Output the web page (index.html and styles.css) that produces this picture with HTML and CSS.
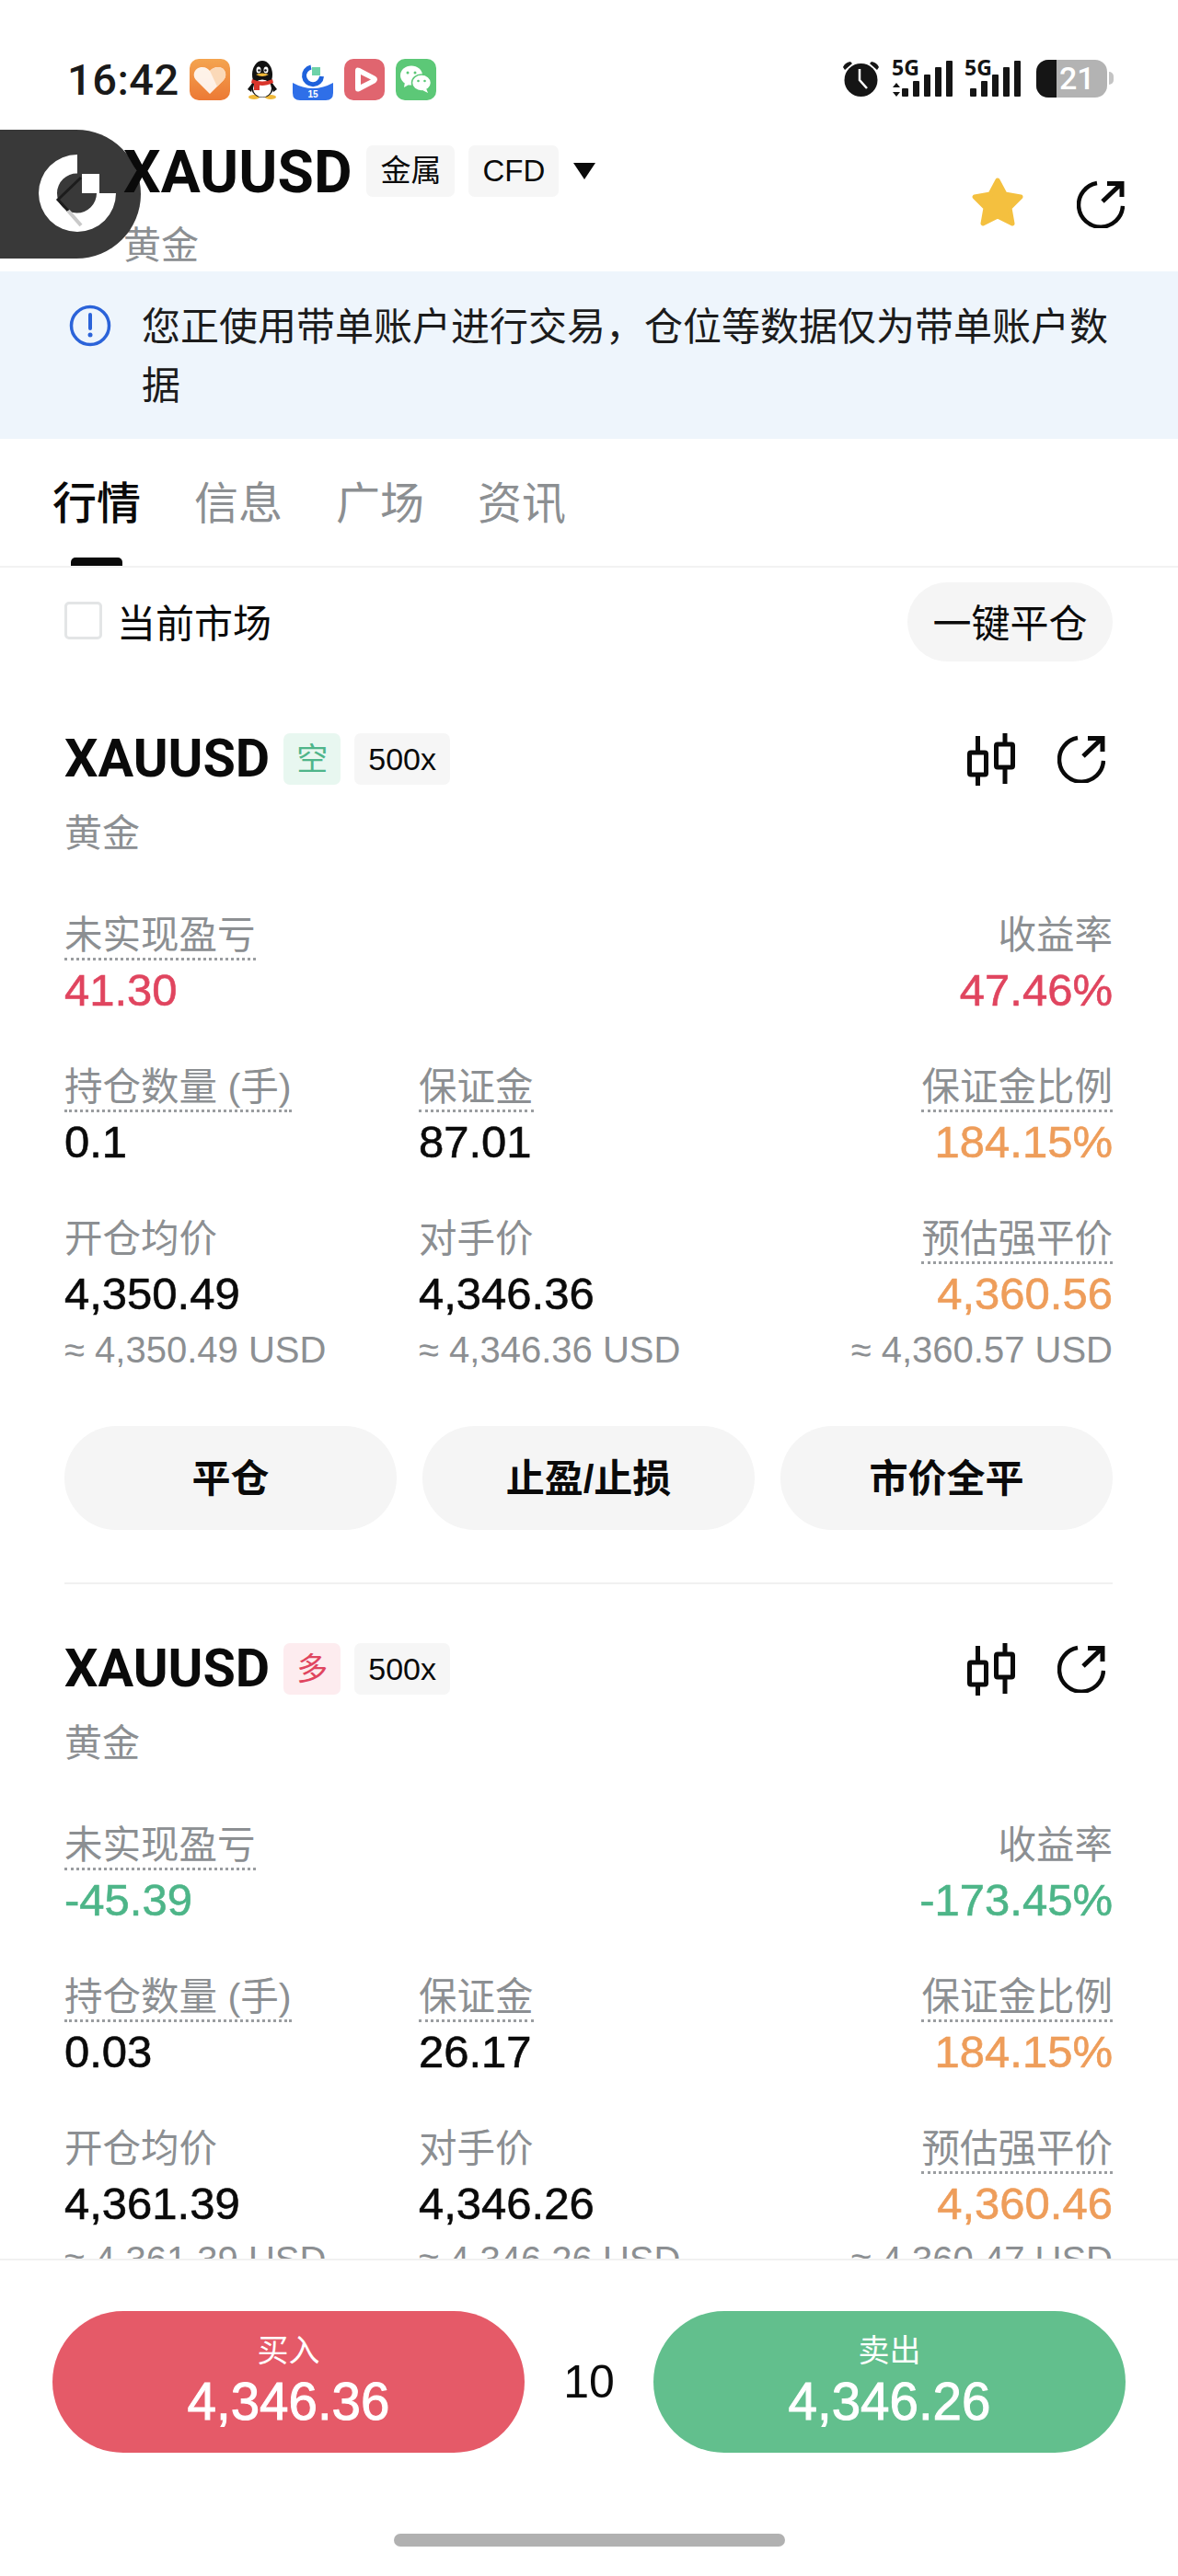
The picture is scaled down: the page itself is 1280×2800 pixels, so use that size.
FILE: index.html
```html
<!DOCTYPE html>
<html lang="zh-CN">
<head>
    <meta charset="UTF-8">
    <meta name="viewport" content="width=device-width, initial-scale=1.0">
    <title>XAUUSD</title>
    <link rel="stylesheet" href="styles.css">
</head>
<body>
    <svg class="defs" width="0" height="0">
        <symbol id="share" viewBox="0 0 52 52">
            <path d="M22 3A24 24 0 1 0 50 28" fill="none" stroke="#0a0a0a" stroke-width="4.5"/>
            <path d="M28 23L48 4M33 3.500H49V18" fill="none" stroke="#0a0a0a" stroke-width="5"/>
        </symbol>
        <symbol id="candle" viewBox="0 0 52 57">
            <path d="M11.500 3V57M41 0V55" stroke="#0a0a0a" stroke-width="5"/>
            <rect x="2.500" y="21" width="18" height="24" rx="1.500" fill="#fff" stroke="#0a0a0a" stroke-width="5"/>
            <rect x="31.500" y="12" width="18" height="25" rx="1.500" fill="#fff" stroke="#0a0a0a" stroke-width="5"/>
        </symbol>
    </svg>

    <div class="phone">
        <div class="status-bar">
            <div class="status-left">
                <span class="time">16:42</span>
                <svg class="app app-orange" width="44" height="45" viewBox="0 0 44 45">
                    <defs>
                        <linearGradient id="orangeBg" x1="0" y1="0" x2="0" y2="1">
                            <stop offset="0" stop-color="#f4a44f"/>
                            <stop offset="1" stop-color="#ec7935"/>
                        </linearGradient>
                    </defs>
                    <rect width="44" height="45" rx="10" fill="url(#orangeBg)"/>
                    <path d="M22 38L7 23C2 17 6 9 14 9C18 9 20 11 22 13C24 11 27 9 31 9C38 9 42 17 37 23Z" fill="#fff" opacity=".88"/>
                    <path d="M22 13C24 11 27 9 31 9C38 9 42 17 37 23L30 30Z" fill="#fbd9b8"/>
                </svg>
                <svg class="app app-qq" width="34" height="42" viewBox="0 0 34 42">
                    <ellipse cx="8" cy="39.500" rx="6" ry="2.500" fill="#f0b93a"/>
                    <ellipse cx="26" cy="39.500" rx="6" ry="2.500" fill="#f0b93a"/>
                    <path d="M8 22L1 31L5 34ZM26 22L33 31L29 34Z" fill="#111"/>
                    <ellipse cx="17" cy="15" rx="11" ry="15" fill="#111"/>
                    <ellipse cx="17" cy="29" rx="12" ry="11" fill="#111"/>
                    <ellipse cx="17" cy="30" rx="10" ry="9.500" fill="#fff"/>
                    <ellipse cx="13" cy="10" rx="2.500" ry="3.500" fill="#fff"/>
                    <ellipse cx="21" cy="10" rx="2.500" ry="3.500" fill="#fff"/>
                    <circle cx="13.500" cy="10.500" r="1.300" fill="#111"/>
                    <circle cx="20.500" cy="10.500" r="1.300" fill="#111"/>
                    <path d="M10 15Q17 12 24 15Q17 19 10 15Z" fill="#f0b93a"/>
                    <path d="M6 20Q17 25 28 20L29 24Q22 27 17 27Q12 27 5 24Z" fill="#d9352b"/>
                    <rect x="8" y="25" width="6" height="7" fill="#d9352b"/>
                </svg>
                <svg class="app app-blue" width="44" height="39" viewBox="0 0 44 39">
                    <path d="M20 3A9.500 9.500 0 1 0 31.500 13" fill="none" stroke="#1f62dc" stroke-width="5"/>
                    <rect x="21" y="3" width="9" height="9" fill="#6ed2a8"/>
                    <path d="M0 20Q22 32 44 20V31Q44 39 36 39H8Q0 39 0 31Z" fill="#2f6fe8"/>
                    <text x="22" y="36" class="app-label" text-anchor="middle">15</text>
                </svg>
                <svg class="app app-red" width="44" height="45" viewBox="0 0 44 45">
                    <rect width="44" height="45" rx="10" fill="#e0656f"/>
                    <path d="M12 13Q12 8 17 10L34 19Q38 22 34 26L17 35Q12 37 12 32Z" fill="#fff"/>
                    <path d="M18 17L29 22.500L18 28Z" fill="#e0656f"/>
                </svg>
                <svg class="app app-green" width="44" height="45" viewBox="0 0 44 45">
                    <rect width="44" height="45" rx="10" fill="#5cc877"/>
                    <ellipse cx="17" cy="18" rx="12" ry="10.500" fill="#fff"/>
                    <path d="M10 25L9 31L16 27Z" fill="#fff"/>
                    <ellipse cx="28" cy="26" rx="10.500" ry="9" fill="#fff" stroke="#5cc877" stroke-width="1.500"/>
                    <path d="M33 32L35 37L29 34Z" fill="#fff"/>
                    <circle cx="13" cy="15" r="1.500" fill="#5cc877"/>
                    <circle cx="21" cy="15" r="1.500" fill="#5cc877"/>
                    <circle cx="24.500" cy="24" r="1.300" fill="#5cc877"/>
                    <circle cx="31.500" cy="24" r="1.300" fill="#5cc877"/>
                </svg>
            </div>
            <div class="status-right">
                <svg width="41" height="39" viewBox="0 0 41 39">
                    <path d="M1 7Q3 2 9 1L11 3L3 10ZM40 7Q38 2 32 1L30 3L38 10Z" fill="#151515"/>
                    <ellipse cx="20.500" cy="21" rx="18" ry="18" fill="#151515"/>
                    <path d="M19 9V21L27 30" fill="none" stroke="#fff" stroke-width="2.500"/>
                </svg>
                <svg class="signal signal-wide" width="68" height="40" viewBox="0 0 68 40">
                    <text x="0" y="17" class="signal-label">5G</text>
                    <path d="M5 25L9 30H1ZM5 40L1 35H9Z" fill="#151515"/>
                    <rect x="11" y="31" width="7" height="9" rx="1" fill="#151515"/>
                    <rect x="23" y="23" width="7" height="17" rx="1" fill="#151515"/>
                    <rect x="35" y="16" width="7" height="24" rx="1" fill="#151515"/>
                    <rect x="47" y="8" width="7" height="32" rx="1" fill="#151515"/>
                    <rect x="59" y="1" width="7" height="39" rx="1" fill="#151515"/>
                </svg>
                <svg class="signal" width="62" height="40" viewBox="0 0 62 40">
                    <text x="0" y="17" class="signal-label">5G</text>
                    <rect x="6" y="31" width="7" height="9" rx="1" fill="#151515"/>
                    <rect x="18" y="23" width="7" height="17" rx="1" fill="#151515"/>
                    <rect x="30" y="16" width="7" height="24" rx="1" fill="#151515"/>
                    <rect x="42" y="8" width="7" height="32" rx="1" fill="#151515"/>
                    <rect x="54" y="1" width="7" height="39" rx="1" fill="#151515"/>
                </svg>
                <div class="battery">
                    <div class="battery-body">
                        <div class="battery-level"></div>
                        <span class="battery-num">21</span>
                    </div>
                    <div class="battery-tip"></div>
                </div>
            </div>
        </div>

        <div class="header">
            <div class="float-badge">
                <svg width="153" height="140" viewBox="0 0 153 140">
                    <path d="M84 27A42 42 0 1 0 126 69H105A21.500 21.500 0 1 1 84 47.500Z" fill="#fff"/>
                    <rect x="89" y="48" width="19" height="21" fill="#fff"/>
                    <path d="M88 52L63 76L74 88" fill="none" stroke="#1c1c1c" stroke-width="3"/>
                    <path d="M74 88L88 104" fill="none" stroke="#c9c9c9" stroke-width="4"/>
                </svg>
            </div>
            <div class="header-main">
                <div class="header-title">
                    <span class="symbol-big">XAUUSD</span>
                    <span class="chip chip-big">金属</span>
                    <span class="chip chip-big">CFD</span>
                    <span class="caret"></span>
                </div>
                <div class="header-sub">黄金</div>
            </div>
            <div class="header-actions">
                <svg width="60" height="56" viewBox="0 0 60 56">
                    <path d="M30 4L38 19L55 22L43 34L46 51L30 43L14 51L17 34L5 22L22 19Z" fill="#f4c03f" stroke="#f4c03f" stroke-width="5" stroke-linejoin="round"/>
                </svg>
                <svg class="share-big" width="52" height="52"><use href="#share"/></svg>
            </div>
        </div>

        <div class="banner">
            <svg class="banner-icon" width="46" height="46" viewBox="0 0 46 46">
                <circle cx="23" cy="23" r="20.500" fill="none" stroke="#2b63d9" stroke-width="3.500"/>
                <path d="M23 11V26" stroke="#2b63d9" stroke-width="4" stroke-linecap="round"/>
                <circle cx="23" cy="33" r="2.500" fill="#2b63d9"/>
            </svg>
            <p class="banner-text">您正使用带单账户进行交易，仓位等数据仅为带单账户数据</p>
        </div>

        <div class="tabs">
            <span class="tab active">行情</span>
            <span class="tab">信息</span>
            <span class="tab">广场</span>
            <span class="tab">资讯</span>
        </div>

        <div class="content">
            <div class="toolbar">
                <label class="market-check">
                    <span class="checkbox"></span>
                    <span class="market-text">当前市场</span>
                </label>
                <button class="close-all">一键平仓</button>
            </div>

            <div class="position">
                <div class="pos-title">
                    <span class="symbol">XAUUSD</span>
                    <span class="chip side-short">空</span>
                    <span class="chip">500x</span>
                    <div class="pos-icons">
                        <svg width="52" height="57"><use href="#candle"/></svg>
                        <svg width="52" height="52"><use href="#share"/></svg>
                    </div>
                </div>
                <div class="pos-name">黄金</div>
                <div class="stats">
                    <div class="stat">
                        <span class="label dotted">未实现盈亏</span>
                        <div class="value red">41.30</div>
                    </div>
                    <div class="stat stat-end">
                        <span class="label">收益率</span>
                        <div class="value red">47.46%</div>
                    </div>
                    <div class="stat">
                        <span class="label dotted">持仓数量 (手)</span>
                        <div class="value">0.1</div>
                    </div>
                    <div class="stat">
                        <span class="label dotted">保证金</span>
                        <div class="value">87.01</div>
                    </div>
                    <div class="stat stat-right">
                        <span class="label dotted">保证金比例</span>
                        <div class="value orange">184.15%</div>
                    </div>
                    <div class="stat">
                        <span class="label">开仓均价</span>
                        <div class="value">4,350.49</div>
                        <div class="approx">≈ 4,350.49 USD</div>
                    </div>
                    <div class="stat">
                        <span class="label">对手价</span>
                        <div class="value">4,346.36</div>
                        <div class="approx">≈ 4,346.36 USD</div>
                    </div>
                    <div class="stat stat-right">
                        <span class="label dotted">预估强平价</span>
                        <div class="value orange">4,360.56</div>
                        <div class="approx">≈ 4,360.57 USD</div>
                    </div>
                </div>
                <div class="pos-buttons">
                    <button class="pos-btn">平仓</button>
                    <button class="pos-btn">止盈/止损</button>
                    <button class="pos-btn">市价全平</button>
                </div>
                <div class="divider"></div>
            </div>

            <div class="position">
                <div class="pos-title">
                    <span class="symbol">XAUUSD</span>
                    <span class="chip side-long">多</span>
                    <span class="chip">500x</span>
                    <div class="pos-icons">
                        <svg width="52" height="57"><use href="#candle"/></svg>
                        <svg width="52" height="52"><use href="#share"/></svg>
                    </div>
                </div>
                <div class="pos-name">黄金</div>
                <div class="stats">
                    <div class="stat">
                        <span class="label dotted">未实现盈亏</span>
                        <div class="value green">-45.39</div>
                    </div>
                    <div class="stat stat-end">
                        <span class="label">收益率</span>
                        <div class="value green">-173.45%</div>
                    </div>
                    <div class="stat">
                        <span class="label dotted">持仓数量 (手)</span>
                        <div class="value">0.03</div>
                    </div>
                    <div class="stat">
                        <span class="label dotted">保证金</span>
                        <div class="value">26.17</div>
                    </div>
                    <div class="stat stat-right">
                        <span class="label dotted">保证金比例</span>
                        <div class="value orange">184.15%</div>
                    </div>
                    <div class="stat">
                        <span class="label">开仓均价</span>
                        <div class="value">4,361.39</div>
                        <div class="approx">≈ 4,361.39 USD</div>
                    </div>
                    <div class="stat">
                        <span class="label">对手价</span>
                        <div class="value">4,346.26</div>
                        <div class="approx">≈ 4,346.26 USD</div>
                    </div>
                    <div class="stat stat-right">
                        <span class="label dotted">预估强平价</span>
                        <div class="value orange">4,360.46</div>
                        <div class="approx">≈ 4,360.47 USD</div>
                    </div>
                </div>
            </div>
        </div>

        <div class="footer">
            <div class="trade-row">
                <button class="trade buy">
                    <span class="trade-label">买入</span>
                    <span class="trade-price">4,346.36</span>
                </button>
                <span class="lots">10</span>
                <button class="trade sell">
                    <span class="trade-label">卖出</span>
                    <span class="trade-price">4,346.26</span>
                </button>
            </div>
            <div class="home-bar"></div>
        </div>
    </div>
</body>
</html>
```

FILE: styles.css
```css
* {margin: 0; padding: 0; box-sizing: border-box;}
body {font-family: "Liberation Sans", "Noto Sans CJK SC", sans-serif; color: #0a0a0a; background: #fff;}
button {font-family: inherit; border: 0; color: inherit;}
svg {display: block; flex: none;}
.defs {position: absolute;}
.phone {width: 1280px; height: 2800px; display: flex; flex-direction: column; overflow: hidden; position: relative;}

/* status bar */
.status-bar {height: 141px; flex: none; padding: 64px 70px 0 73px; display: flex; justify-content: space-between; align-items: flex-start;}
.status-left {display: flex; align-items: center; height: 45px;}
.time {font-family: Roboto, sans-serif; font-weight: 500; font-size: 47px; line-height: 45px; letter-spacing: .5px; color: #1a1a1a; width: 133px;}
.app-qq {margin-left: 18px;}
.app-blue {margin: 6px 0 0 16px;}
.app-red, .app-green {margin-left: 12px;}
.app-label {font-size: 10px; font-weight: 700; fill: #fff;}
.status-right {display: flex; align-items: center; height: 42px;}
.signal {margin-left: 11px; overflow: visible;}
.signal-wide {margin-left: 13px;}
.signal-label {font-family: "Open Sans", sans-serif; font-weight: 700; font-size: 23px; fill: #151515;}
.battery {display: flex; align-items: center; margin-left: 16px;}
.battery-body {width: 77px; height: 41px; border-radius: 13px; background: #b3b3b3; overflow: hidden; display: flex; align-items: center;}
.battery-level {width: 22px; height: 100%; background: #151515;}
.battery-num {color: #fff; font-family: Roboto, sans-serif; font-weight: 500; font-size: 34px; line-height: 41px; margin-left: 3px;}
.battery-tip {width: 5px; height: 14px; margin-left: 2px; background: #c4c4c4; border-radius: 0 5px 5px 0;}

/* header */
.header {height: 154px; flex: none; padding: 17px 58px 0 134px; display: flex; justify-content: space-between; position: relative;}
.float-badge {position: absolute; left: 0; top: 0; width: 153px; height: 140px; background: #393939; border-radius: 0 70px 70px 0;}
.header-title {display: flex; align-items: center; height: 56px;}
.symbol-big {font-family: Roboto, sans-serif; font-size: 64px; font-weight: 700; line-height: 56px; margin-right: 16px; position: relative; top: 2px;}
.chip {height: 56px; padding: 0 15px; border-radius: 7px; background: #f6f6f6; font-size: 34px; line-height: 56px; display: block;}
.chip-big {font-size: 33px; margin-right: 15px; padding: 0 15px;}
.caret {width: 0; height: 0; border-left: 12px solid transparent; border-right: 12px solid transparent; border-top: 18px solid #0a0a0a; margin-left: 1px;}
.header-sub {font-size: 41px; line-height: 40px; margin-top: 33px; color: #8c8f92;}
.header-actions {display: flex; align-items: flex-start; gap: 56px; margin-top: 34px;}
.share-big {margin-top: 4px;}

/* banner */
.banner {height: 182px; flex: none; padding: 4px 70px 0 75px; background: #eef5fc; display: flex; align-items: center; gap: 33px;}
.banner-icon {align-self: flex-start; margin-top: 32px;}
.banner-text {font-size: 42px; line-height: 64px; color: #1c1c1c; width: 1056px;}

/* tabs */
.tabs {height: 140px; flex: none; padding: 46px 0 0 57px; display: flex; gap: 58px; border-bottom: 2px solid #f2f2f2;}
.tab {font-size: 48px; line-height: 50px; height: 92px; color: #8c8f92; position: relative;}
.tab.active {color: #0a0a0a; font-weight: 500;}
.tab.active::after {content: ""; position: absolute; left: 20px; right: 20px; bottom: 0; height: 9px; background: #0a0a0a; border-radius: 5px 5px 0 0;}

/* list */
.content {flex: 1; min-height: 0; overflow: hidden;}
.toolbar {height: 180px; padding: 16px 71px 78px 70px; display: flex; justify-content: space-between; align-items: center;}
.market-check {display: flex; align-items: center; gap: 16px; font-size: 42px; line-height: 48px;}
.market-text {position: relative; top: 3px;}
.checkbox {width: 41px; height: 41px; border: 3px solid #e3e5e6; border-radius: 5px; margin-top: -3px;}
.close-all {width: 223px; height: 86px; padding-bottom: 4px; border-radius: 43px; background: #f5f5f5; font-size: 42px;}
.position {padding: 0 71px 0 70px;}
.pos-title {display: flex; align-items: center; height: 56px; gap: 15px;}
.symbol {font-family: Roboto, sans-serif; font-size: 57.500px; font-weight: 700; line-height: 56px;}
.side-short {background: #e8f7f0; color: #4fb58a; padding: 0 14px; font-size: 34px;}
.side-long {background: #fdecef; color: #e0455f; padding: 0 14px; font-size: 34px;}
.pos-icons {margin-left: auto; margin-right: 8px; display: flex; align-items: center; gap: 46px;}
.pos-name {font-size: 41px; line-height: 40px; margin-top: 33px; color: #8c8f92;}
.stats {display: grid; grid-template-columns: 385px 1fr auto; row-gap: 54px; margin-top: 67px;}
.stat-end {grid-column: 3;}
.stat-end, .stat-right {text-align: right;}
.label {display: inline-block; font-size: 41.500px; line-height: 48px; color: #8c8f92; border-bottom: 3px solid transparent;}
.label.dotted {border-bottom: 3px dotted #9a9da0;}
.value {font-size: 49px; line-height: 56px; margin-top: 4px; -webkit-text-stroke: .6px currentColor;}
.value.red {color: #e0455f;}
.value.green {color: #4db588;}
.value.orange {color: #ee9d5a;}
.approx {font-size: 40px; line-height: 44px; margin-top: 11px; color: #8c8f92;}
.pos-buttons {display: grid; grid-template-columns: repeat(3, 1fr); gap: 28px; margin-top: 61px;}
.pos-btn {height: 113px; padding-bottom: 6px; border-radius: 57px; background: #f5f5f5; font-size: 42px; font-weight: 700;}
.divider {height: 2px; margin: 57px 0 64px; background: #f1f1f1;}

/* footer */
.footer {height: 345px; flex: none; background: #fff; border-top: 2px solid #f1f1f1; padding-top: 55px; display: flex; flex-direction: column; align-items: center;}
.trade-row {width: 1166px; display: flex; align-items: center; justify-content: space-between;}
.trade {width: 513px; height: 154px; border-radius: 77px; color: #fff; display: flex; flex-direction: column; align-items: center; padding-top: 23px;}
.buy {background: #e55a68;}
.sell {background: #62bf8d;}
.trade-label {font-size: 34px; line-height: 40px;}
.trade-price {font-size: 56.500px; line-height: 60px; margin-top: 6px; -webkit-text-stroke: 1px currentColor;}
.lots {font-size: 50px;}
.home-bar {width: 425px; height: 14px; margin-top: 88px; background: #b1b1b1; border-radius: 7px;}
```
